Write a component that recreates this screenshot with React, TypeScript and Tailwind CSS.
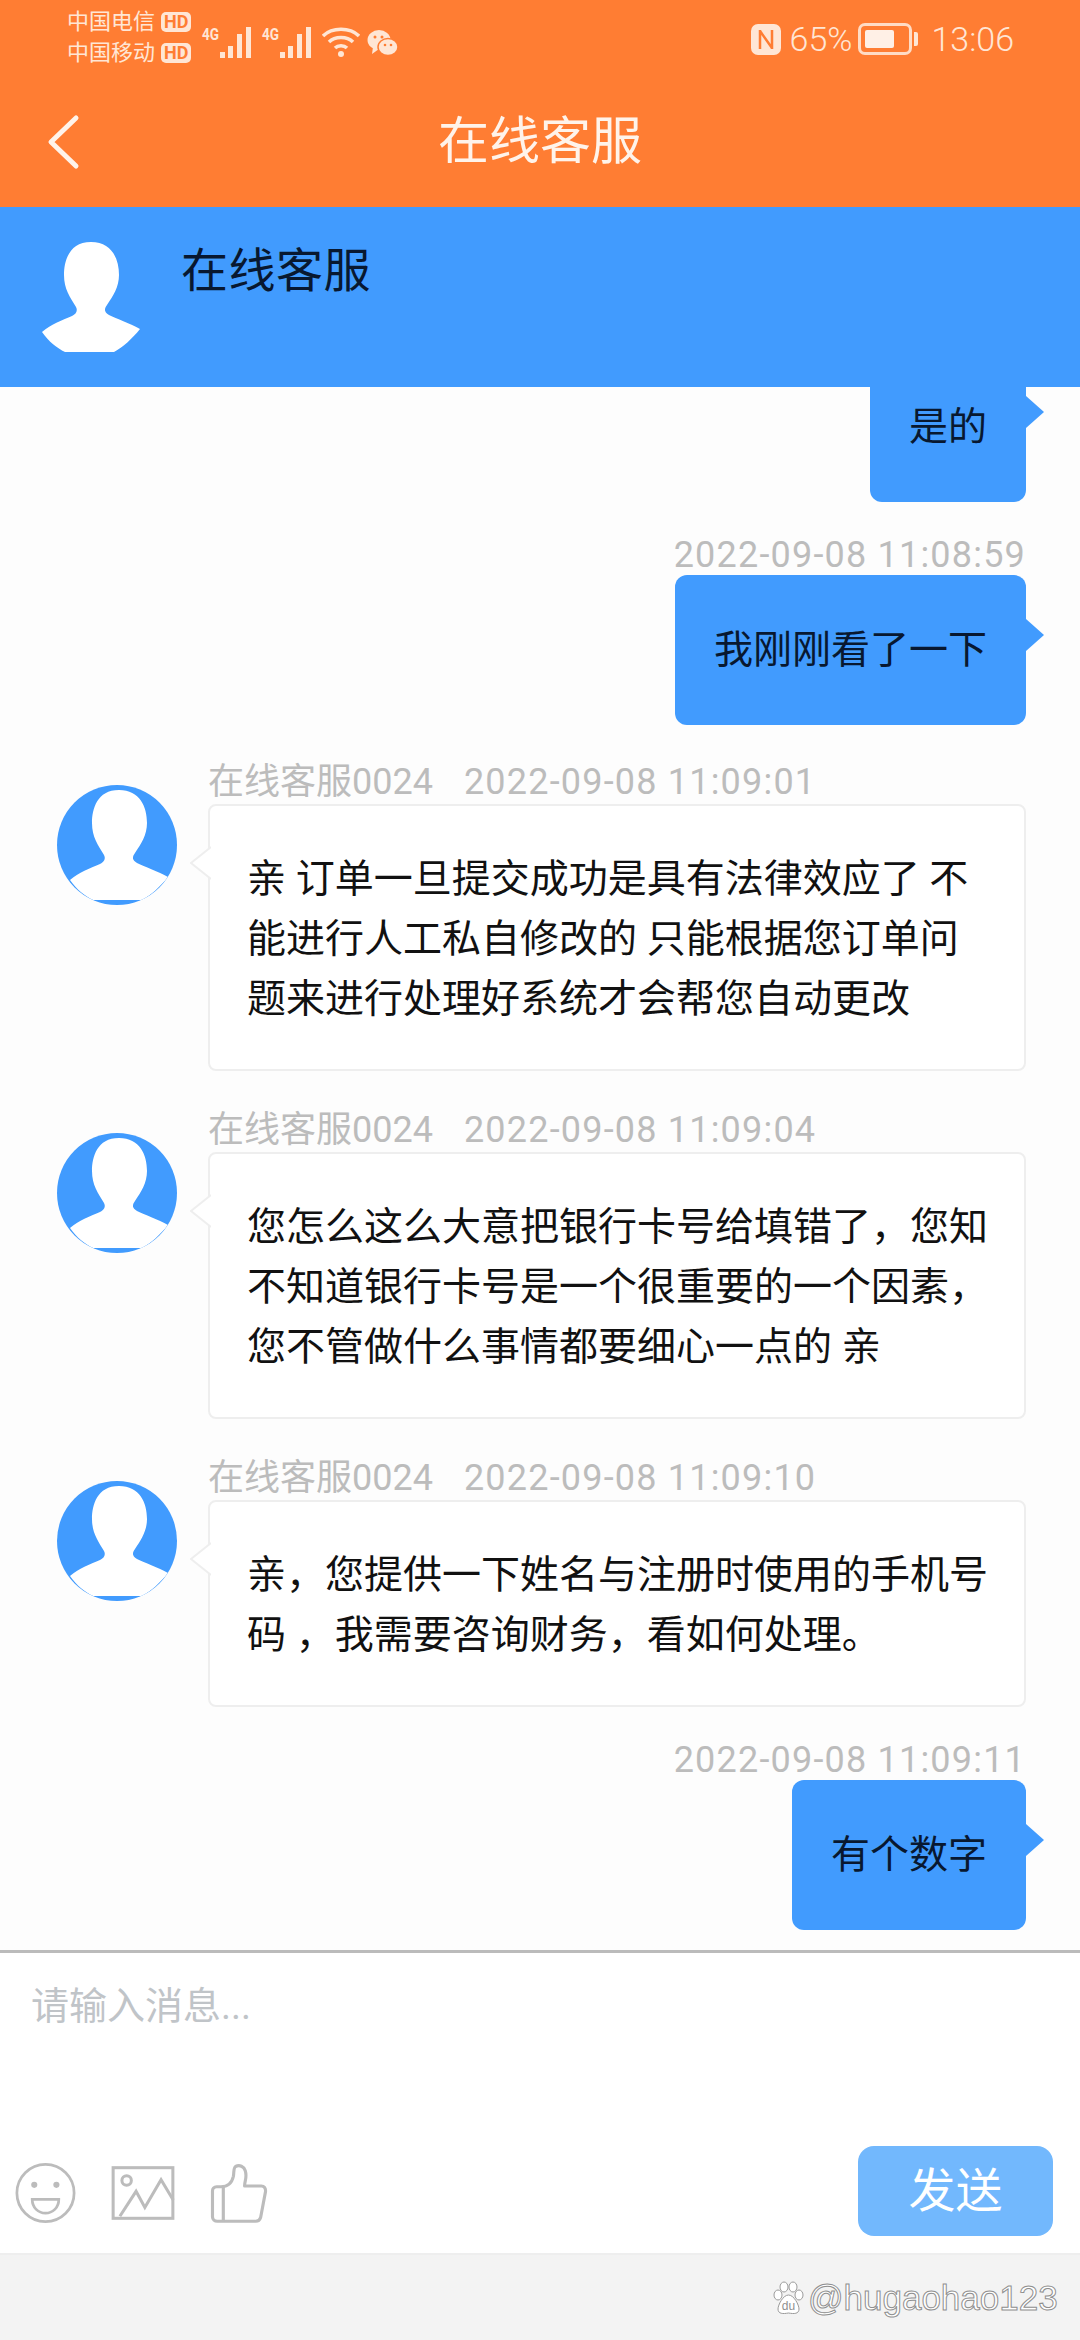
const font = "font-['Roboto','Noto_Sans_CJK_SC',sans-serif]";

function Person({ className }: { className: string }) {
  return (
    <svg viewBox="0 0 120 120" className={className} fill="#fff">
      <path d="M62 5C40 5 35 24 35 38C35 52 41 60 47 70C49 74 47 77 43 79C34 83 22 87 13 95C20 105 28 111 36 115L85 115C94 110 103 102 111 92C100 86 88 82 80 78C75 75 75 72 78 68C84 59 90 50 90 38C90 22 83 5 62 5Z" />
    </svg>
  );
}

function Avatar() {
  return (
    <div className="h-[120px] w-[120px] shrink-0 overflow-hidden rounded-full bg-[#419bfe]">
      <Person className="h-[120px] w-[120px]" />
    </div>
  );
}

function Signal() {
  return (
    <svg className="overflow-visible" width="50" height="34" viewBox="0 0 50 34" fill="#ffe6d5">
      <text x="0" y="14" fontSize="17" fontWeight="700" fontFamily="Roboto" textLength="17" lengthAdjust="spacingAndGlyphs">4G</text>
      <rect x="18" y="26" width="5" height="6" />
      <rect x="26" y="20" width="5" height="12" />
      <rect x="35" y="8" width="5" height="24" />
      <rect x="44" y="1" width="5" height="31" />
    </svg>
  );
}

function StatusBar() {
  return (
    <div className="flex h-[78px] items-start justify-between pl-[67px] pr-[66px] pt-[12px] text-[#ffe6d5]">
      <div className="flex items-center">
        <div className="flex flex-col gap-[11px]">
          {['中国电信', '中国移动'].map((name) => (
            <div key={name} className="flex h-[20px] items-center gap-[6px] text-[22px] leading-[20px]">
              <span>{name}</span>
              <span className="rounded-[5px] bg-[#ffe6d5] px-[3px] text-[18px] font-bold leading-[20px] text-[#ff7d33]">HD</span>
            </div>
          ))}
        </div>
        <div className="ml-[11px] mt-[10px] flex gap-[10px]">
          <Signal />
          <Signal />
        </div>
        <svg className="ml-[10px] mt-[8px]" width="38" height="32" viewBox="0 0 38 32" fill="none" stroke="#ffe6d5" strokeWidth="3.5">
          <path d="M1 10C10 1 28 1 37 10" />
          <path d="M7 16C13 10 25 10 31 16" />
          <path d="M13 22C16 19 22 19 25 22" />
          <circle cx="19" cy="28" r="3" fill="#ffe6d5" stroke="none" />
        </svg>
        <svg className="ml-[7px] mt-[10px]" width="31" height="28" viewBox="0 0 31 28" fill="#ffe6d5">
          <ellipse cx="12" cy="11" rx="11.5" ry="10" />
          <path d="M6 18L5 25L12 20Z" />
          <ellipse cx="21" cy="18" rx="10" ry="8.5" stroke="#ff7d33" strokeWidth="1.5" />
          <circle cx="8" cy="8" r="1.5" fill="#ff7d33" />
          <circle cx="15" cy="8" r="1.5" fill="#ff7d33" />
          <circle cx="18" cy="16" r="1.3" fill="#ff7d33" />
          <circle cx="24" cy="16" r="1.3" fill="#ff7d33" />
        </svg>
      </div>
      <div className="mt-[10px] flex items-center text-[34px] font-light leading-[34px]">
        <svg width="30" height="31" viewBox="0 0 30 31" fill="#ffe6d5">
          <rect width="30" height="31" rx="7" />
          <path d="M9 6V25M21 6V25M9 7L21 24" stroke="#ff7d33" strokeWidth="2.5" fill="none" />
        </svg>
        <span className="ml-[9px]">65%</span>
        <div className="ml-[6px] flex h-[32px] w-[54px] items-center rounded-[7px] border-[3px] border-[#ffdcc5] p-[4px]">
          <div className="h-full w-[29px] rounded-[2px] bg-[#fff0e6]" />
        </div>
        <div className="ml-[2px] h-[14px] w-[4px] rounded-r-[2px] bg-[#ffe6d5]" />
        <span className="ml-[13px]">13:06</span>
      </div>
    </div>
  );
}

function RightMessage({ time, text }: { time?: string; text: string }) {
  return (
    <div className="mr-[54px] flex shrink-0 flex-col items-end">
      {time && <div className="h-[46px] pt-[4px] text-[36px] leading-[44px] tracking-[1.2px] text-[#bcbcbc]">{time}</div>}
      <div className="relative h-[150px] rounded-[12px] bg-[#419bfe] px-[39px] text-[39px] leading-[150px] text-[#081830]">
        {text}
        <svg className="absolute left-full top-[44px]" width="18" height="32" viewBox="0 0 18 32" fill="#419bfe">
          <path d="M0 0L18 16L0 32Z" />
        </svg>
      </div>
    </div>
  );
}

function LeftMessage({ time, lines }: { time: string; lines: string[] }) {
  return (
    <div className="ml-[57px] mr-[54px] flex shrink-0 items-start gap-[31px]">
      <div className="pt-[27px]">
        <Avatar />
      </div>
      <div className="min-w-0 flex-1">
        <div className="flex h-[46px] gap-[31px] pt-[1px] text-[36px] leading-[46px] text-[#bcbcbc]">
          <span>在线客服0024</span>
          <span className="tracking-[1.2px]">{time}</span>
        </div>
        <div className="relative rounded-[8px] border-2 border-[#eeeeee] bg-white pb-[40px] pl-[37px] pt-[43px] text-[39px] leading-[60px] text-[#111]">
          {lines.map((line) => (
            <div key={line} className="whitespace-nowrap">{line}</div>
          ))}
          <svg className="absolute right-full top-[40px] -mr-[1px]" width="21" height="34" viewBox="0 0 21 34" fill="#fff" stroke="#eeeeee" strokeWidth="2">
            <path d="M21 1L1 17L21 33" />
          </svg>
        </div>
      </div>
    </div>
  );
}

export default function App() {
  return (
    <div className={`flex h-[2340px] w-[1080px] flex-col overflow-hidden bg-[#fdfdfd] ${font}`}>
      <div className="h-[207px] shrink-0 bg-[#ff7d33]">
        <StatusBar />
        <div className="relative flex h-[129px] items-center justify-center text-[51px] text-[#fff3ea]">
          <svg className="absolute left-[46px] top-[36px]" width="34" height="56" viewBox="0 0 34 56" fill="none" stroke="#fff3ea" strokeWidth="5" strokeLinecap="round" strokeLinejoin="round">
            <path d="M30 4L5 28L30 52" />
          </svg>
          在线客服
        </div>
      </div>

      <div className="flex h-[180px] shrink-0 bg-[#419bfe]">
        <Person className="ml-[29px] mt-[30px] h-[120px] w-[120px]" />
        <div className="ml-[32px] mt-[34px] text-[47px] leading-[60px] tracking-[0.5px] text-[#081830]">在线客服</div>
      </div>

      <div className="flex min-h-0 flex-1 flex-col justify-end overflow-hidden pb-[20px]">
        <RightMessage text="是的" />
        <div className="h-[27px] shrink-0" />
        <RightMessage time="2022-09-08 11:08:59" text="我刚刚看了一下" />
        <div className="h-[33px] shrink-0" />
        <LeftMessage
          time="2022-09-08 11:09:01"
          lines={['亲 订单一旦提交成功是具有法律效应了 不', '能进行人工私自修改的 只能根据您订单问', '题来进行处理好系统才会帮您自动更改']}
        />
        <div className="h-[35px] shrink-0" />
        <LeftMessage
          time="2022-09-08 11:09:04"
          lines={['您怎么这么大意把银行卡号给填错了，您知', '不知道银行卡号是一个很重要的一个因素，', '您不管做什么事情都要细心一点的 亲']}
        />
        <div className="h-[35px] shrink-0" />
        <LeftMessage
          time="2022-09-08 11:09:10"
          lines={['亲，您提供一下姓名与注册时使用的手机号', '码 ，我需要咨询财务，看如何处理。']}
        />
        <div className="h-[27px] shrink-0" />
        <RightMessage time="2022-09-08 11:09:11" text="有个数字" />
      </div>

      <div className="flex h-[303px] shrink-0 flex-col justify-between border-t-[3px] border-[#bbbbbb] bg-white pb-[17px] pt-[28px]">
        <div className="pl-[31px] text-[38px] leading-[50px] text-[#c0c4c8]">请输入消息...</div>
        <div className="flex items-end justify-between pl-[15px] pr-[27px]">
          <div className="mb-[12px] flex items-center gap-[35px]">
            <svg width="61" height="62" viewBox="42 186 178 182" fill="none" stroke="#bcbcbc" strokeWidth="8">
              <circle cx="131" cy="277" r="84" />
              <circle cx="98" cy="253" r="9" fill="#bcbcbc" stroke="none" />
              <circle cx="163" cy="253" r="9" fill="#bcbcbc" stroke="none" />
              <path d="M92 296H170C170 320 152 336 131 336C110 336 92 320 92 296Z" />
            </svg>
            <svg width="64" height="54" viewBox="315 197 187 160" fill="none" stroke="#bcbcbc" strokeWidth="9">
              <rect x="320" y="202" width="177" height="150" />
              <circle cx="360" cy="240" r="14" />
              <path d="M340 346L388 272L414 320L462 238L498 298" />
            </svg>
            <svg width="58" height="60" viewBox="610 190 164 172" fill="none" stroke="#bcbcbc" strokeWidth="9" strokeLinejoin="round">
              <path d="M640 258H628C620 258 616 264 616 270V344C616 352 622 357 630 357H740C748 357 752 352 754 346L768 272C769 262 764 256 756 256H708C708 240 716 232 710 212C706 200 694 194 682 200C676 204 678 214 676 228C672 246 662 258 640 258Z" />
              <path d="M647 258V357" />
            </svg>
          </div>
          <div className="flex h-[90px] w-[195px] items-center justify-center rounded-[16px] bg-[#72b8fd] text-[47px] text-white">发送</div>
        </div>
      </div>

      <div className="relative h-[87px] shrink-0 border-t-2 border-[#eeeeee] bg-[#f3f3f3]">
        <div className="absolute left-[773px] top-[23px] flex h-[40px] items-center gap-[4px]">
          <svg width="31" height="34" viewBox="0 0 31 34" fill="#fff" stroke="#9a9a9a" strokeWidth="1">
            <ellipse cx="5" cy="14" rx="4" ry="5" />
            <ellipse cx="11" cy="6" rx="4" ry="5" />
            <ellipse cx="20" cy="6" rx="4" ry="5" />
            <ellipse cx="26" cy="14" rx="4" ry="5" />
            <path d="M15.5 14C10 14 5 24 5 28C5 33 10 33 15.5 32C21 33 26 33 26 28C26 24 21 14 15.5 14Z" />
            <text x="15.5" y="29" fontSize="12" textAnchor="middle" fill="#8f8f8f" stroke="none" fontFamily="Liberation Sans">du</text>
          </svg>
          <span className="font-['Liberation_Sans',sans-serif] text-[35px] leading-[40px] text-white [-webkit-text-stroke:1px_#8f8f8f]">@hugaohao123</span>
        </div>
      </div>
    </div>
  );
}
